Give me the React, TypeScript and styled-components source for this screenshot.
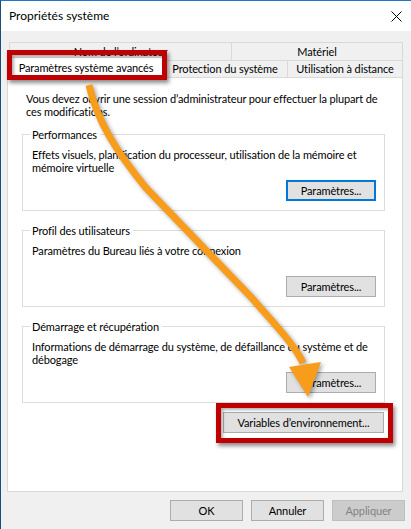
import React from "react"
import styled, { createGlobalStyle, css } from "styled-components"

const GlobalStyle = createGlobalStyle`
  body {
    margin: 0;
    background: #ffffff;
    font-family: Lato, "Liberation Sans", sans-serif;
    font-size: 11px;
    letter-spacing: -0.12px;
    color: #000;
  }
`

const redBox = css`
  &::after {
    content: "";
    position: absolute;
    border: 5px solid #c00000;
    box-shadow: 2px 3px 4px rgba(0, 0, 0, 0.45), inset 2px 2px 3px rgba(0, 0, 0, 0.3);
    pointer-events: none;
    z-index: 5;
  }
`

const Window = styled.div`
  position: relative;
  width: 410px;
  height: 528px;
  border-top: 1px solid #1d77c6;
  border-left: 1px solid #1b4f78;
  background: #f0f0f0;
  display: flex;
  flex-direction: column;
  overflow: hidden;
`

const TitleBar = styled.div`
  height: 30px;
  background: #fff;
  display: flex;
  align-items: center;
  justify-content: space-between;
  padding: 0 9px 0 8px;
`

const Title = styled.span`
  font-size: 12px;
  letter-spacing: 0;
  padding-bottom: 2px;
`

const Body = styled.div`
  flex: 1;
  display: flex;
  flex-direction: column;
  padding: 11px 0 0 6px;
`

const Tabs = styled.div`
  margin-left: 2px;
  width: 394px;
  display: flex;
  flex-direction: column;
`

const TabRow = styled.div`
  display: flex;
`

const Tab = styled.div<{ $w?: number; $active?: boolean; $tall?: boolean }>`
  position: relative;
  box-sizing: border-box;
  height: ${(p) => (p.$tall ? 18 : 17)}px;
  flex: ${(p) => (p.$w ? `0 0 ${p.$w}px` : "1")};
  border: 1px solid #d9d9d9;
  border-bottom: none;
  margin-left: -1px;
  &:first-child { margin-left: 0; }
  display: flex;
  align-items: center;
  justify-content: center;
  padding-bottom: 1px;
  white-space: nowrap;
  ${(p) =>
    p.$active &&
    css`
      background: #fff;
      height: 21px;
      margin-top: -3px;
      margin-bottom: -1px;
      z-index: 2;
      ${redBox}
      &::after { top: -8px; left: -3px; right: -5px; bottom: -2px; }
    `}
`

const Panel = styled.div`
  box-sizing: border-box;
  width: 396px;
  height: 415px;
  background: #fff;
  border: 1px solid #d9d9d9;
  padding: 14px 17px 0 14px;
  display: flex;
  flex-direction: column;
`

const Text = styled.p`
  margin: 0;
  line-height: 13px;
`

const Intro = styled(Text)`
  margin-left: 4px;
`

const Groups = styled.div`
  margin-top: 10px;
  display: flex;
  flex-direction: column;
  gap: 13px;
`

const Group = styled.fieldset`
  margin: 0;
  min-width: 0;
  border: 1px solid #dcdcdc;
  padding: 7px 8px 9px 9px;
  display: flex;
  flex-direction: column;
`

const Legend = styled.legend`
  margin-left: -2px;
  padding: 0 3px 0 2px;
  line-height: 13px;
`

const Description = styled(Text)`
  min-height: 26px;
`

const ButtonRow = styled.div`
  display: flex;
  justify-content: flex-end;
  margin-top: 6px;
`

const Button = styled.button<{ $focus?: boolean; $w?: number; $mark?: boolean }>`
  position: relative;
  box-sizing: border-box;
  height: 21px;
  width: ${(p) => p.$w ?? 90}px;
  padding: 0 0 1px;
  font: inherit;
  letter-spacing: inherit;
  color: #000;
  background: #e1e1e1;
  border: 1px solid #adadad;
  border-radius: 0;
  ${(p) => p.$focus && css`border: 2px solid #0078d7;`}
  &:disabled {
    background: #cccccc;
    border-color: #bfbfbf;
    color: #838383;
  }
  ${(p) =>
    p.$mark &&
    css`
      ${redBox}
      &::after { top: -10px; left: -8px; right: -10px; bottom: -11px; }
    `}
`

const EnvRow = styled.div`
  display: flex;
  justify-content: flex-end;
  margin-top: 9px;
  padding-right: 1px;
`

const Footer = styled.div`
  display: flex;
  justify-content: flex-end;
  gap: 8px;
  padding: 8px 6px 0 0;
`

const Arrow = styled.svg`
  position: absolute;
  left: 0;
  top: 0;
  pointer-events: none;
  z-index: 6;
  filter: drop-shadow(2px 2px 2px rgba(0, 0, 0, 0.35));
`

const CloseIcon = () => (
  <svg width="11" height="11" viewBox="0 0 11 11">
    <path d="M0.5 0.5 L10.5 10.5 M10.5 0.5 L0.5 10.5" stroke="#000" strokeWidth="1" fill="none" />
  </svg>
)

type GroupData = { title: string; text: string; focus?: boolean }

const groups: GroupData[] = [
  {
    title: "Performances",
    text: "Effets visuels, planification du processeur, utilisation de la mémoire et mémoire virtuelle",
    focus: true,
  },
  { title: "Profil des utilisateurs", text: "Paramètres du Bureau liés à votre connexion" },
  {
    title: "Démarrage et récupération",
    text: "Informations de démarrage du système, de défaillance du système et de débogage",
  },
]

export default function App() {
  return (
    <>
      <GlobalStyle />
      <Window>
        <TitleBar>
          <Title>Propriétés système</Title>
          <CloseIcon />
        </TitleBar>
        <Body>
          <Tabs>
            <TabRow>
              <Tab $w={223} $tall>Nom de l’ordinateur</Tab>
              <Tab $tall>Matériel</Tab>
            </TabRow>
            <TabRow>
              <Tab $w={154} $active>Paramètres système avancés</Tab>
              <Tab $w={126}>Protection du système</Tab>
              <Tab>Utilisation à distance</Tab>
            </TabRow>
          </Tabs>
          <Panel>
            <Intro>
              Vous devez ouvrir une session d’administrateur pour effectuer la plupart de ces modifications.
            </Intro>
            <Groups>
              {groups.map((g) => (
                <Group key={g.title}>
                  <Legend>{g.title}</Legend>
                  <Description>{g.text}</Description>
                  <ButtonRow>
                    <Button $focus={g.focus}>Paramètres...</Button>
                  </ButtonRow>
                </Group>
              ))}
            </Groups>
            <EnvRow>
              <Button $w={161} $mark>Variables d’environnement...</Button>
            </EnvRow>
          </Panel>
          <Footer>
            <Button $w={73}>OK</Button>
            <Button $w={73}>Annuler</Button>
            <Button $w={73} disabled>Appliquer</Button>
          </Footer>
        </Body>
        <Arrow width="411" height="529" viewBox="0 0 411 529">
          <path
            d="M88 84 C96 120 115 150 145 187 L250 296 C275 325 293 343 302 362"
            stroke="#f89c1c"
            strokeWidth="7"
            fill="none"
          />
          <polygon points="288,366 320,361 307,396" fill="#f89c1c" />
        </Arrow>
      </Window>
    </>
  )
}
